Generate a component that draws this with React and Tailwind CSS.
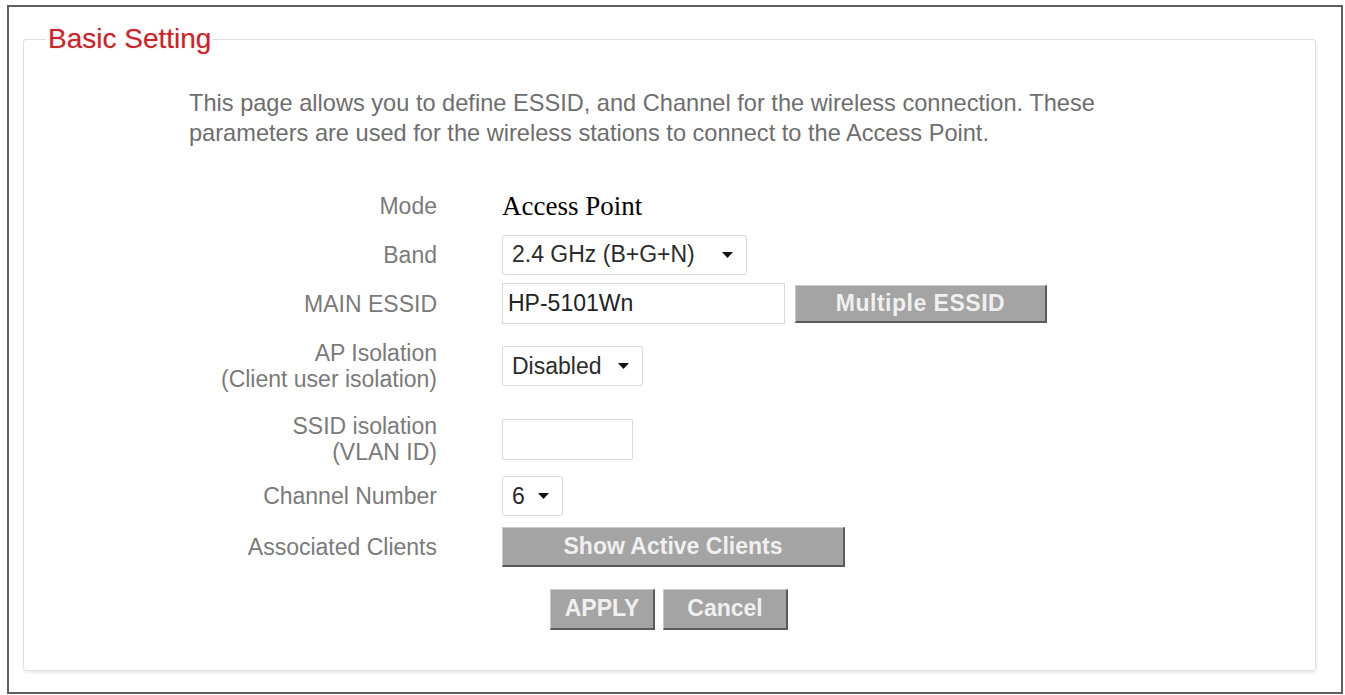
import React from 'react';

const Caret = () => (
  <svg width="11" height="6" viewBox="0 0 11 6" className="shrink-0">
    <path d="M0 0 H11 L5.5 6 Z" fill="#111" />
  </svg>
);

// fake dropdown box, rendered the same on every browser
const SelectBox = ({ value, width }) => (
  <div
    className={`${width} h-[40px] flex items-center justify-between pl-[9px] pr-[13px] bg-white border border-[#d9d9d9] rounded-[3px] text-[23px] text-[#2b2b2b]`}
  >
    <span>{value}</span>
    <Caret />
  </div>
);

const GrayButton = ({ children, className = '' }) => (
  <button
    className={`flex items-center justify-center bg-[#a4a4a4] text-[#f0f0f0] font-bold text-[23px] border-t border-l border-[#c9c9c9] border-r-2 border-b-2 border-r-[#5a5a5a] border-b-[#5a5a5a] ${className}`}
  >
    {children}
  </button>
);

const Row = ({ label, height, children }) => (
  <div className={`flex items-center ${height}`}>
    <div className="w-[248px] text-right text-[23px] leading-[26px] text-[#7a7a7a]">{label}</div>
    <div className="ml-[65px] flex items-center">{children}</div>
  </div>
);

export default function App() {
  return (
    <div className="w-[1345px] h-[695px] bg-white pl-[7px] pt-[5px] font-['Liberation_Sans',Arial,sans-serif]">
      <div className="w-[1336px] h-[689px] border-2 border-[#5f5f5f] pl-[14px] pr-[25px] pt-[18px]">
        <fieldset className="h-[646px] border border-[#dedede] rounded-[3px] shadow-[1px_2px_3px_rgba(0,0,0,0.08)]">
          <legend className="ml-[22px] px-[2px] text-[28px] leading-[28px] text-[#c1272d] [text-shadow:0_0_2px_rgba(220,60,60,0.35)]">
            Basic Setting
          </legend>

          <div className="pl-[165px] pt-[35px]">
            <p className="text-[23.6px] leading-[30px] text-[#6e6e6e]">
              This page allows you to define ESSID, and Channel for the wireless connection. These
              <br />
              parameters are used for the wireless stations to connect to the Access Point.
            </p>

            <div className="mt-[34px] flex flex-col">
              <Row label="Mode" height="h-[48px]">
                <span className="font-['Liberation_Serif','Times_New_Roman',serif] text-[27px] text-black">
                  Access Point
                </span>
              </Row>

              <Row label="Band" height="h-[49px]">
                <SelectBox value="2.4 GHz (B+G+N)" width="w-[245px]" />
              </Row>

              <Row label="MAIN ESSID" height="h-[49px]">
                <div className="w-[283px] h-[41px] flex items-center pl-[5px] border border-[#d9d9d9] text-[23px] text-[#222]">
                  HP-5101Wn
                </div>
                <GrayButton className="ml-[10px] w-[252px] h-[38px] tracking-[0.5px]">Multiple ESSID</GrayButton>
              </Row>

              <Row
                label={
                  <>
                    AP Isolation
                    <br />
                    (Client user isolation)
                  </>
                }
                height="h-[76px]"
              >
                <SelectBox value="Disabled" width="w-[141px]" />
              </Row>

              <Row
                label={
                  <>
                    SSID isolation
                    <br />
                    (VLAN ID)
                  </>
                }
                height="h-[70px]"
              >
                <div className="w-[131px] h-[41px] border border-[#d9d9d9] rounded-[2px] bg-white" />
              </Row>

              <Row label="Channel Number" height="h-[44px]">
                <SelectBox value="6" width="w-[61px]" />
              </Row>

              <Row label="Associated Clients" height="h-[58px]">
                <GrayButton className="w-[343px] h-[40px]">Show Active Clients</GrayButton>
              </Row>

              <div className="h-[66px] flex items-center pl-[361px] gap-[8px]">
                <GrayButton className="w-[105px] h-[41px]">APPLY</GrayButton>
                <GrayButton className="w-[125px] h-[41px]">Cancel</GrayButton>
              </div>
            </div>
          </div>
        </fieldset>
      </div>
    </div>
  );
}
